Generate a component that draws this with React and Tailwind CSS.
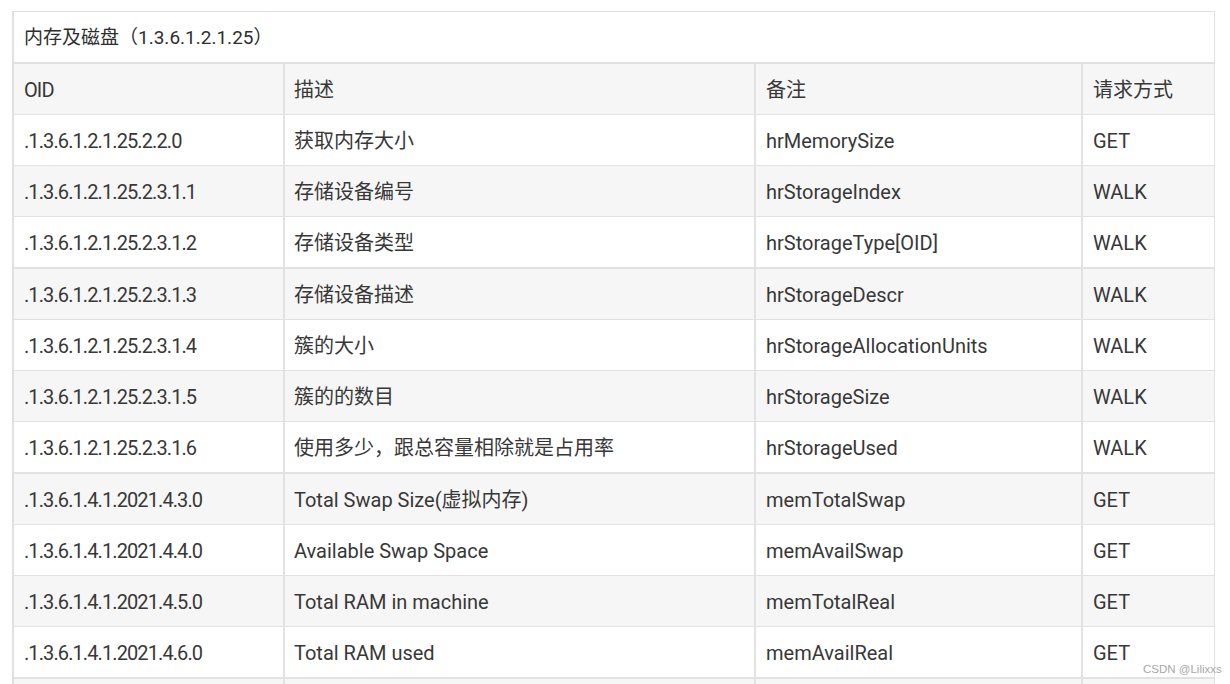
import React from 'react';

const rows = [
  ['.1.3.6.1.2.1.25.2.2.0', '获取内存大小', 'hrMemorySize', 'GET'],
  ['.1.3.6.1.2.1.25.2.3.1.1', '存储设备编号', 'hrStorageIndex', 'WALK'],
  ['.1.3.6.1.2.1.25.2.3.1.2', '存储设备类型', 'hrStorageType[OID]', 'WALK'],
  ['.1.3.6.1.2.1.25.2.3.1.3', '存储设备描述', 'hrStorageDescr', 'WALK'],
  ['.1.3.6.1.2.1.25.2.3.1.4', '簇的大小', 'hrStorageAllocationUnits', 'WALK'],
  ['.1.3.6.1.2.1.25.2.3.1.5', '簇的的数目', 'hrStorageSize', 'WALK'],
  ['.1.3.6.1.2.1.25.2.3.1.6', '使用多少，跟总容量相除就是占用率', 'hrStorageUsed', 'WALK'],
  ['.1.3.6.1.4.1.2021.4.3.0', 'Total Swap Size(虚拟内存)', 'memTotalSwap', 'GET'],
  ['.1.3.6.1.4.1.2021.4.4.0', 'Available Swap Space', 'memAvailSwap', 'GET'],
  ['.1.3.6.1.4.1.2021.4.5.0', 'Total RAM in machine', 'memTotalReal', 'GET'],
  ['.1.3.6.1.4.1.2021.4.6.0', 'Total RAM used', 'memAvailReal', 'GET'],
];

// rows followed by a 2px rule in the screenshot
const thick = [2, 6, 10];

function Row({ cells, gray, thickBottom }) {
  return (
    <div
      className={
        'flex ' +
        (thickBottom ? 'h-[52px] border-b-2 ' : 'h-[51px] border-b ') +
        'border-[#e2e2e2] ' +
        (gray ? 'bg-[#f6f6f6]' : 'bg-white')
      }
    >
      <div className="w-[269px] shrink-0 flex items-center pt-[2px] px-[10px] tracking-[-0.9px]">{cells[0]}</div>
      <div className="w-[471px] shrink-0 flex items-center pt-[2px] px-[9px] border-l-2 border-[#e2e2e2]">{cells[1]}</div>
      <div className="w-[327px] shrink-0 flex items-center pt-[2px] px-[10px] border-l-2 border-[#e2e2e2]">{cells[2]}</div>
      <div className="flex-1 flex items-center pt-[2px] px-[10px] border-l-2 border-[#e2e2e2]">{cells[3]}</div>
    </div>
  );
}

export default function App() {
  return (
    <div
      className="relative w-[1230px] h-[684px] overflow-hidden bg-white pl-[12px] pt-[11px] text-[#383838]"
      style={{ fontFamily: 'Roboto, "Noto Sans CJK SC", sans-serif' }}
    >
      <div className="w-[1203px] border-t border-r border-l-2 border-[#e0e0e0] text-[20px]">
        <div className="h-[52px] flex items-center pt-[2px] px-[10px] border-b-2 border-[#e0e0e0] bg-white text-[19px] text-[#2e2e2e]">
          内存及磁盘（1.3.6.1.2.1.25）
        </div>
        <Row cells={['OID', '描述', '备注', '请求方式']} gray />
        {rows.map((r, i) => (
          <Row key={r[0]} cells={r} gray={i % 2 === 1} thickBottom={thick.includes(i)} />
        ))}
        <Row cells={['', '', '', '']} gray />
      </div>
      <div
        className="absolute left-[1143px] top-[661px] text-[11.5px] text-[#a8a8a8]"
        style={{ fontFamily: '"Liberation Sans", sans-serif' }}
      >
        CSDN @Lilixxs
      </div>
    </div>
  );
}
